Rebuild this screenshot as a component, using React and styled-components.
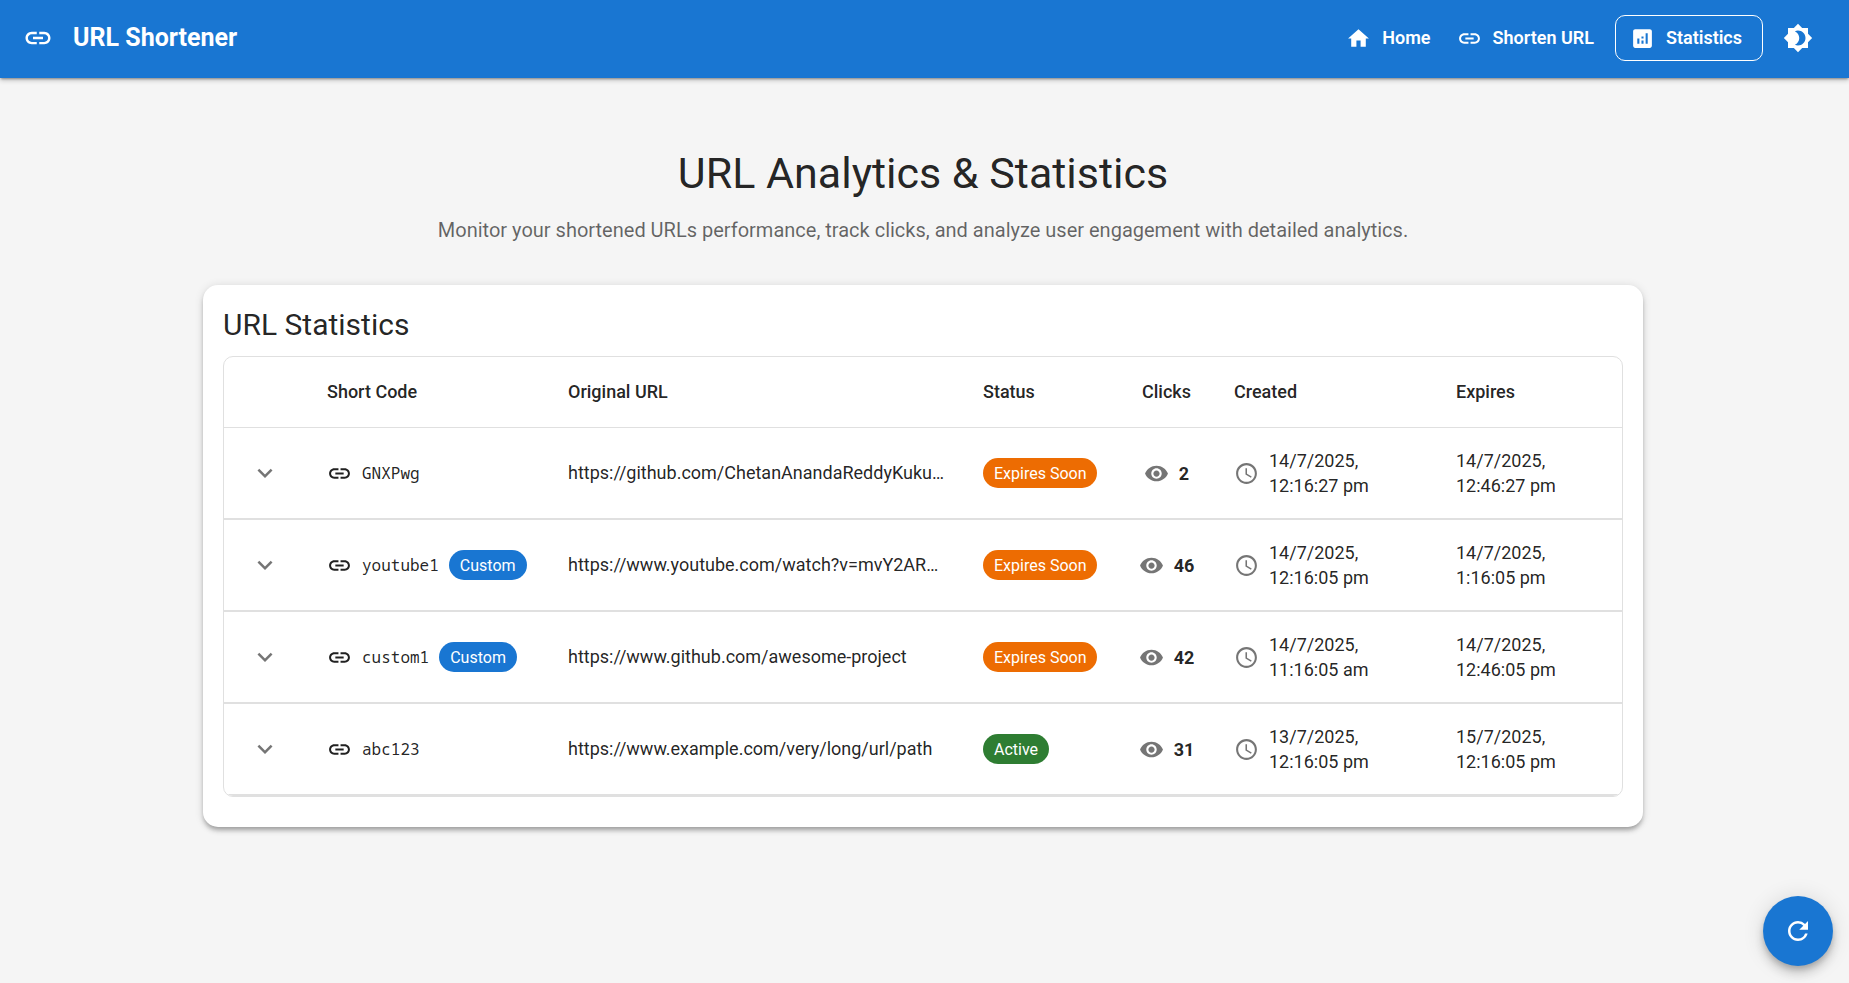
import React from "react";
import styled, { createGlobalStyle } from "styled-components";
import {
  MdLink,
  MdHome,
  MdAnalytics,
  MdBrightness4,
  MdExpandMore,
  MdVisibility,
  MdAccessTime,
  MdRefresh,
} from "react-icons/md";

const GlobalStyle = createGlobalStyle`
  *, *::before, *::after { box-sizing: border-box; }
  body {
    margin: 0;
    background: #f5f5f5;
    color: rgba(0, 0, 0, 0.87);
    font-family: Roboto, "Liberation Sans", sans-serif;
    font-size: 18px;
    line-height: 25px;
  }
`;

const AppBar = styled.header`
  display: flex;
  align-items: center;
  height: 78px;
  padding: 0 26px 2px 23px;
  background: #1976d2;
  color: #fff;
  box-shadow: 0 2px 2px -1px rgba(0, 0, 0, 0.3), 0 2px 5px 0 rgba(0, 0, 0, 0.24);
`;

const Brand = styled.div`
  display: flex;
  align-items: center;
  flex: 1;
  gap: 20px;
  font-size: 25px;
  font-weight: 700;
  line-height: 42px;
`;

const Nav = styled.nav`
  display: flex;
  align-items: center;
  gap: 10px;
`;

const NavLink = styled.a`
  display: flex;
  align-items: center;
  gap: 11px;
  height: 46px;
  padding: ${(p) => (p.$active ? "0 20px 0 14px" : "0 11px 0 5px")};
  border: ${(p) => (p.$active ? "1px solid #fff" : "0")};
  border-radius: 10px;
  color: inherit;
  font-weight: 600;
  line-height: 24px;
  text-decoration: none;
  white-space: nowrap;
`;

const IconButton = styled.button`
  display: inline-flex;
  padding: ${(p) => (p.$small ? 6 : 10)}px;
  border: 0;
  border-radius: 50%;
  background: none;
  color: ${(p) => (p.$small ? "rgba(0, 0, 0, 0.54)" : "inherit")};
  cursor: pointer;
`;

const Main = styled.main`
  max-width: 1503px;
  margin: 0 auto;
  padding: 69px 33px 40px 30px;
`;

const PageTitle = styled.h1`
  margin: 0 0 16px;
  font-size: 43px;
  font-weight: 400;
  line-height: 52px;
  text-align: center;
`;

const Subtitle = styled.p`
  margin: 0 0 40px;
  color: rgba(0, 0, 0, 0.6);
  font-size: 20px;
  line-height: 30px;
  text-align: center;
`;

const Card = styled.section`
  padding: 20px 20px 30px;
  border-radius: 15px;
  background: #fff;
  box-shadow: 0 4px 4px -2px rgba(0, 0, 0, 0.2), 0 4px 5px 0 rgba(0, 0, 0, 0.14),
    0 1px 10px 0 rgba(0, 0, 0, 0.12);
`;

const CardTitle = styled.h2`
  margin: 0 0 11px;
  font-size: 30px;
  font-weight: 400;
  line-height: 40px;
`;

const TableFrame = styled.div`
  overflow: auto hidden;
  border: 1px solid #e0e0e0;
  border-radius: 10px;
`;

const Table = styled.table`
  width: 100%;
  min-width: 1200px;
  table-layout: fixed;
  border-collapse: separate;
  border-spacing: 0;
`;

const Col = styled.col`
  width: ${(p) => p.$width}px;
`;

const HeadCell = styled.th`
  padding: 20px;
  height: 71px;
  border-bottom: 1px solid #e0e0e0;
  font-weight: 500;
  line-height: 30px;
  text-align: ${(p) => (p.$center ? "center" : "left")};
`;

const Cell = styled.td`
  height: 92px;
  padding: 0 20px;
  border-bottom: 2px solid #e0e0e0;
  text-align: ${(p) => (p.$center ? "center" : "left")};
`;

const Group = styled.div`
  display: flex;
  align-items: center;
  justify-content: ${(p) => (p.$center ? "center" : "flex-start")};
  gap: 10px;

  svg {
    flex: none;
    color: ${(p) => (p.$muted ? "rgba(0, 0, 0, 0.54)" : "inherit")};
  }
`;

const Code = styled.code`
  font-family: "Noto Sans Mono", "Liberation Mono", monospace;
  font-size: 16px;
`;

const UrlText = styled.div`
  line-height: 24px;
  white-space: nowrap;
`;

const chipColors = { primary: "#1976d2", warning: "#ed6c02", success: "#2e7d32" };

const Chip = styled.span`
  display: inline-flex;
  align-items: center;
  height: 30px;
  padding: 0 11px;
  border-radius: 15px;
  background: ${(p) => chipColors[p.$tone]};
  color: #fff;
  font-size: 16px;
  white-space: nowrap;
`;

const Fab = styled.button`
  position: fixed;
  right: 16px;
  bottom: 17px;
  display: flex;
  align-items: center;
  justify-content: center;
  width: 70px;
  height: 70px;
  padding: 0;
  border: 0;
  border-radius: 50%;
  background: #1976d2;
  color: #fff;
  cursor: pointer;
  box-shadow: 0 4px 6px -1px rgba(0, 0, 0, 0.2), 0 8px 12px 0 rgba(0, 0, 0, 0.14),
    0 1px 22px 0 rgba(0, 0, 0, 0.12);
`;

const columnWidths = [83, 241, 415, 156, 95, 222, 186];

const rows = [
  {
    code: "GNXPwg",
    url: "https://github.com/ChetanAnandaReddyKuku…",
    status: "Expires Soon",
    clicks: 2,
    created: "14/7/2025, 12:16:27 pm",
    expires: "14/7/2025, 12:46:27 pm",
  },
  {
    code: "youtube1",
    custom: true,
    url: "https://www.youtube.com/watch?v=mvY2AR…",
    status: "Expires Soon",
    clicks: 46,
    created: "14/7/2025, 12:16:05 pm",
    expires: "14/7/2025, 1:16:05 pm",
  },
  {
    code: "custom1",
    custom: true,
    url: "https://www.github.com/awesome-project",
    status: "Expires Soon",
    clicks: 42,
    created: "14/7/2025, 11:16:05 am",
    expires: "14/7/2025, 12:46:05 pm",
  },
  {
    code: "abc123",
    url: "https://www.example.com/very/long/url/path",
    status: "Active",
    clicks: 31,
    created: "13/7/2025, 12:16:05 pm",
    expires: "15/7/2025, 12:16:05 pm",
  },
];

function StatRow({ row }) {
  return (
    <tr>
      <Cell>
        <IconButton $small type="button" aria-label="Expand row">
          <MdExpandMore size={30} />
        </IconButton>
      </Cell>
      <Cell>
        <Group>
          <MdLink size={25} />
          <Code>{row.code}</Code>
          {row.custom && <Chip $tone="primary">Custom</Chip>}
        </Group>
      </Cell>
      <Cell>
        <UrlText>{row.url}</UrlText>
      </Cell>
      <Cell>
        <Group>
          <Chip $tone={row.status === "Active" ? "success" : "warning"}>{row.status}</Chip>
        </Group>
      </Cell>
      <Cell $center>
        <Group $center $muted>
          <MdVisibility size={25} />
          <strong>{row.clicks}</strong>
        </Group>
      </Cell>
      <Cell>
        <Group $muted>
          <MdAccessTime size={25} />
          <span>{row.created}</span>
        </Group>
      </Cell>
      <Cell>{row.expires}</Cell>
    </tr>
  );
}

export default function App() {
  return (
    <>
      <GlobalStyle />
      <AppBar>
        <Brand>
          <MdLink size={30} />
          <span>URL Shortener</span>
        </Brand>
        <Nav>
          <NavLink href="#home">
            <MdHome size={25} />
            Home
          </NavLink>
          <NavLink href="#shorten">
            <MdLink size={25} />
            Shorten URL
          </NavLink>
          <NavLink href="#statistics" $active aria-current="page">
            <MdAnalytics size={25} />
            Statistics
          </NavLink>
          <IconButton type="button" aria-label="Toggle theme">
            <MdBrightness4 size={30} />
          </IconButton>
        </Nav>
      </AppBar>
      <Main>
        <PageTitle>URL Analytics &amp; Statistics</PageTitle>
        <Subtitle>
          Monitor your shortened URLs performance, track clicks, and analyze user engagement with
          detailed analytics.
        </Subtitle>
        <Card>
          <CardTitle>URL Statistics</CardTitle>
          <TableFrame>
            <Table>
              <colgroup>
                {columnWidths.map((w, i) => (
                  <Col key={i} $width={w} />
                ))}
              </colgroup>
              <thead>
                <tr>
                  <HeadCell aria-label="Details" />
                  <HeadCell>Short Code</HeadCell>
                  <HeadCell>Original URL</HeadCell>
                  <HeadCell>Status</HeadCell>
                  <HeadCell $center>Clicks</HeadCell>
                  <HeadCell>Created</HeadCell>
                  <HeadCell>Expires</HeadCell>
                </tr>
              </thead>
              <tbody>
                {rows.map((row) => (
                  <StatRow key={row.code} row={row} />
                ))}
              </tbody>
            </Table>
          </TableFrame>
        </Card>
      </Main>
      <Fab type="button" aria-label="Refresh statistics">
        <MdRefresh size={30} />
      </Fab>
    </>
  );
}
